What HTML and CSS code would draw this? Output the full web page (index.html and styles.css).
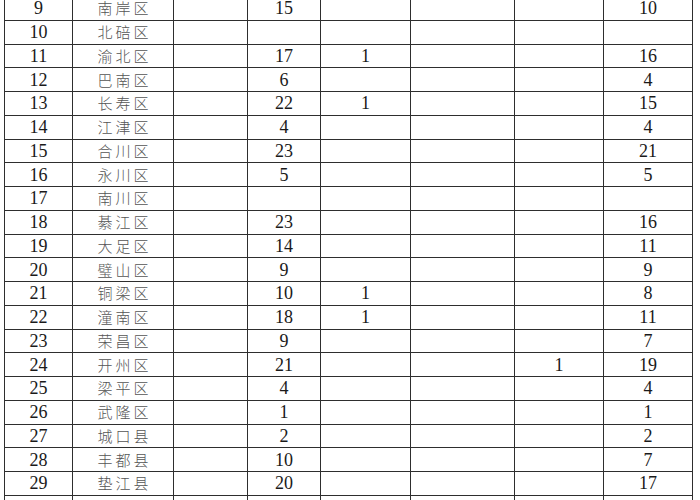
FILE: index.html
```html
<!DOCTYPE html>
<html lang="zh-CN">
<head>
<meta charset="utf-8">
<title>区县统计表</title>
<link rel="stylesheet" href="styles.css">
</head>
<body>
<table class="sheet">
<colgroup>
<col class="c-no"><col class="c-name"><col class="c-a"><col class="c-b"><col class="c-c"><col class="c-d"><col class="c-e"><col class="c-f">
</colgroup>
<tbody>
<tr><td class="num">9</td><td class="name">南岸区</td><td></td><td class="num">15</td><td></td><td></td><td></td><td class="num">10</td></tr>
<tr><td class="num">10</td><td class="name">北碚区</td><td></td><td></td><td></td><td></td><td></td><td></td></tr>
<tr><td class="num">11</td><td class="name">渝北区</td><td></td><td class="num">17</td><td class="num">1</td><td></td><td></td><td class="num">16</td></tr>
<tr><td class="num">12</td><td class="name">巴南区</td><td></td><td class="num">6</td><td></td><td></td><td></td><td class="num">4</td></tr>
<tr><td class="num">13</td><td class="name">长寿区</td><td></td><td class="num">22</td><td class="num">1</td><td></td><td></td><td class="num">15</td></tr>
<tr><td class="num">14</td><td class="name">江津区</td><td></td><td class="num">4</td><td></td><td></td><td></td><td class="num">4</td></tr>
<tr><td class="num">15</td><td class="name">合川区</td><td></td><td class="num">23</td><td></td><td></td><td></td><td class="num">21</td></tr>
<tr><td class="num">16</td><td class="name">永川区</td><td></td><td class="num">5</td><td></td><td></td><td></td><td class="num">5</td></tr>
<tr><td class="num">17</td><td class="name">南川区</td><td></td><td></td><td></td><td></td><td></td><td></td></tr>
<tr><td class="num">18</td><td class="name">綦江区</td><td></td><td class="num">23</td><td></td><td></td><td></td><td class="num">16</td></tr>
<tr><td class="num">19</td><td class="name">大足区</td><td></td><td class="num">14</td><td></td><td></td><td></td><td class="num">11</td></tr>
<tr><td class="num">20</td><td class="name">璧山区</td><td></td><td class="num">9</td><td></td><td></td><td></td><td class="num">9</td></tr>
<tr><td class="num">21</td><td class="name">铜梁区</td><td></td><td class="num">10</td><td class="num">1</td><td></td><td></td><td class="num">8</td></tr>
<tr><td class="num">22</td><td class="name">潼南区</td><td></td><td class="num">18</td><td class="num">1</td><td></td><td></td><td class="num">11</td></tr>
<tr><td class="num">23</td><td class="name">荣昌区</td><td></td><td class="num">9</td><td></td><td></td><td></td><td class="num">7</td></tr>
<tr><td class="num">24</td><td class="name">开州区</td><td></td><td class="num">21</td><td></td><td></td><td class="num">1</td><td class="num">19</td></tr>
<tr><td class="num">25</td><td class="name">梁平区</td><td></td><td class="num">4</td><td></td><td></td><td></td><td class="num">4</td></tr>
<tr><td class="num">26</td><td class="name">武隆区</td><td></td><td class="num">1</td><td></td><td></td><td></td><td class="num">1</td></tr>
<tr><td class="num">27</td><td class="name">城口县</td><td></td><td class="num">2</td><td></td><td></td><td></td><td class="num">2</td></tr>
<tr><td class="num">28</td><td class="name">丰都县</td><td></td><td class="num">10</td><td></td><td></td><td></td><td class="num">7</td></tr>
<tr><td class="num">29</td><td class="name">垫江县</td><td></td><td class="num">20</td><td></td><td></td><td></td><td class="num">17</td></tr>
<tr><td class="num">30</td><td class="name">忠　县</td><td></td><td class="num">26</td><td></td><td></td><td></td><td class="num">20</td></tr>
</tbody>
</table>
</body>
</html>
```
FILE: styles.css
```css
html, body {
  margin: 0;
  padding: 0;
  background: #ffffff;
}
body {
  overflow: hidden;
  height: 500px;
}
.sheet {
  border-collapse: collapse;
  table-layout: fixed;
  width: 689px;
  margin: -4px 0 0 4px;
}
.c-no { width: 68px; }
.c-name { width: 101px; }
.c-a { width: 74px; }
.c-b { width: 73px; }
.c-c { width: 90px; }
.c-d { width: 104px; }
.c-e { width: 89px; }
.c-f { width: 89px; }
.sheet td {
  border: 1px solid #2e2e2e;
  padding: 0;
  height: 22.75px;
  text-align: center;
  vertical-align: middle;
  line-height: 20px;
}
.num {
  font-family: "Liberation Serif", "Times New Roman", serif;
  font-size: 18px;
  color: #1a1a1a;
}
.name {
  font-family: "Noto Sans CJK SC", "Noto Sans CJK JP", sans-serif;
  font-weight: 300;
  font-size: 15px;
  letter-spacing: 3px;
  text-indent: 3px;
  color: #555555;
}
```
